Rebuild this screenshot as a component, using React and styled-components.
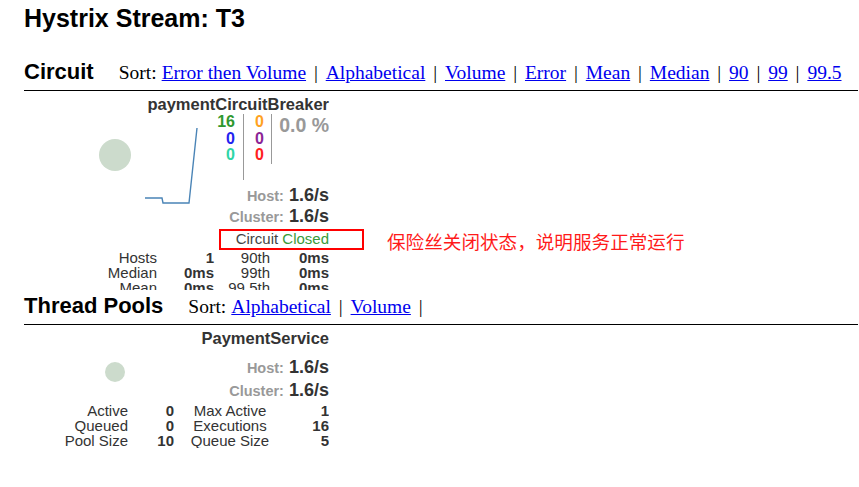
import React from 'react'
import styled, { createGlobalStyle } from 'styled-components'

const GlobalStyle = createGlobalStyle`
  body {
    margin: 0;
    background: #fff;
    color: #000;
    font-family: "Liberation Sans", Arial, sans-serif;
  }
`

const circuitSorts = ['Error then Volume', 'Alphabetical', 'Volume', 'Error', 'Mean', 'Median', '90', '99', '99.5']
const poolSorts = ['Alphabetical', 'Volume']

const circuitStats = [
    ['Hosts', '1', '90th', '0ms'],
    ['Median', '0ms', '99th', '0ms'],
    ['Mean', '0ms', '99.5th', '0ms']
]

const poolStats = [
    ['Active', '0', 'Max Active', '1'],
    ['Queued', '0', 'Executions', '16'],
    ['Pool Size', '10', 'Queue Size', '5']
]

const Page = styled.div`
    padding: 4px 1px 0 24px;
`

const Title = styled.h1`
    margin: 0;
    font-size: 25px;
    line-height: 29px;
    font-weight: bold;
`

const SectionHeader = styled.div`
    display: flex;
    align-items: baseline;
    height: 31px;
    margin-top: ${props => props.$top || 0}px;
    border-bottom: 1px solid #000;
`

const SectionTitle = styled.h2`
    margin: 0;
    font-size: 22px;
    line-height: 26px;
    font-weight: bold;
`

const Sort = styled.div`
    margin-left: 25px;
    font-family: "Liberation Serif", "Times New Roman", serif;
    font-size: 19.5px;
    line-height: 20px;
    white-space: nowrap;
`

const SortLink = styled.a`
    color: #0000ee;
    text-decoration: underline;
    cursor: pointer;
    margin-left: ${props => props.$first ? '5px' : '0'};
`

const Sep = styled.span`
    padding: 0 3px;
`

const Monitor = styled.div`
    width: 305px;
    color: #333;
`

const MonitorName = styled.div`
    margin-top: 3px;
    text-align: right;
    font-size: 16.5px;
    line-height: 20px;
    font-weight: bold;
    color: #333;
`

const MonitorBody = styled.div`
    display: flex;
    margin-top: ${props => props.$top || 0}px;
`

const Chart = styled.svg`
    display: block;
    flex: none;
`

const Side = styled.div`
    flex: 1;
    display: flex;
    flex-direction: column;
`

const Counters = styled.div`
    display: flex;
    margin-bottom: 5px;
`

const CountColumn = styled.div`
    box-sizing: border-box;
    width: ${props => props.$width}px;
    height: ${props => props.$height}px;
    padding-right: ${props => props.$pad}px;
    border-right: 1px solid #999;
    text-align: right;
    font-size: 16px;
    line-height: 16.5px;
    font-weight: bold;
`

const Count = styled.div`
    color: ${props => props.$color};
`

const ErrorRate = styled.div`
    flex: 1;
    text-align: right;
    font-size: 19.5px;
    line-height: 22px;
    font-weight: bold;
    color: #999;
`

const RateRow = styled.div`
    text-align: right;
    font-size: 18px;
    line-height: ${props => props.$line}px;
    font-weight: bold;
    color: #333;
    white-space: nowrap;
`

const RateLabel = styled.span`
    font-size: 14.5px;
    color: #999;
`

const StatusRow = styled.div`
    position: relative;
    margin-top: 2px;
    text-align: right;
    font-size: 15px;
    line-height: 20px;
    color: #444;
`

const Closed = styled.span`
    color: #3a9a3a;
`

const Highlight = styled.div`
    position: absolute;
    left: 195px;
    top: 0;
    width: 145px;
    height: 21px;
    box-sizing: border-box;
    border: 2px solid #ff0000;
`

const Note = styled.div`
    position: absolute;
    left: 363px;
    top: 1px;
    white-space: nowrap;
    font-family: "Noto Sans CJK SC", "Liberation Sans", sans-serif;
    font-size: 18.6px;
    line-height: 21px;
    color: #ff1a1a;
`

const StatsGrid = styled.div`
    display: grid;
    grid-template-columns: ${props => props.$cols};
    margin-top: ${props => props.$top}px;
    margin-bottom: ${props => props.$bottom || 0}px;
    height: ${props => props.$height ? props.$height + 'px' : 'auto'};
    overflow: hidden;
    font-size: 15px;
    line-height: 15px;
    color: #333;
`

const Cell = styled.div`
    text-align: ${props => props.$align || 'right'};
    font-weight: ${props => props.$bold ? 'bold' : 'normal'};
    white-space: nowrap;
`

const SortBar = ({ items, trailing }) => (
    <Sort>
        Sort:
        {items.map((item, i) => (
            <React.Fragment key={item}>
                {i > 0 && <Sep>&nbsp;|&nbsp;</Sep>}
                <SortLink $first={i === 0}>{item}</SortLink>
            </React.Fragment>
        ))}
        {trailing && <Sep>&nbsp;|</Sep>}
    </Sort>
)

const Stats = ({ rows, cols, top, bottom, height, centerThird }) => (
    <StatsGrid $cols={cols} $top={top} $bottom={bottom} $height={height}>
        {rows.map(row => row.map((cell, i) => (
            <Cell key={row[0] + i} $bold={i % 2 === 1} $align={centerThird && i === 2 ? 'center' : 'right'}>
                {cell}
            </Cell>
        )))}
    </StatsGrid>
)

const App = () => {
    return (
        <Page>
            <GlobalStyle />
            <Title>Hystrix Stream: T3</Title>

            <SectionHeader $top={26}>
                <SectionTitle>Circuit</SectionTitle>
                <SortBar items={circuitSorts} />
            </SectionHeader>

            <Monitor>
                <MonitorName>paymentCircuitBreaker</MonitorName>
                <MonitorBody>
                    <Chart width="186" height="111" viewBox="0 0 186 111">
                        <circle cx="91" cy="41" r="16" fill="#ccdbcc" />
                        <polyline
                            points="121,84 138,84 139,89 165,89 173,14"
                            fill="none"
                            stroke="#4a84b6"
                            strokeWidth="1.4"
                        />
                    </Chart>
                    <Side>
                        <Counters>
                            <CountColumn $width={34} $height={66} $pad={8}>
                                <Count $color="#2f982f">16</Count>
                                <Count $color="#2323f0">0</Count>
                                <Count $color="#2ed5a6">0</Count>
                            </CountColumn>
                            <CountColumn $width={28} $height={50} $pad={7}>
                                <Count $color="#ffa21f">0</Count>
                                <Count $color="#8c2596">0</Count>
                                <Count $color="#ff2020">0</Count>
                            </CountColumn>
                            <ErrorRate>0.0 %</ErrorRate>
                        </Counters>
                        <RateRow $line={20}><RateLabel>Host:</RateLabel> 1.6/s</RateRow>
                        <RateRow $line={20}><RateLabel>Cluster:</RateLabel> 1.6/s</RateRow>
                    </Side>
                </MonitorBody>
                <StatusRow>
                    Circuit <Closed>Closed</Closed>
                    <Highlight />
                    <Note>保险丝关闭状态，说明服务正常运行</Note>
                </StatusRow>
                <Stats rows={circuitStats} cols="133px 57px 56px 59px" top={1} height={40} bottom={3} />
            </Monitor>

            <SectionHeader>
                <SectionTitle>Thread Pools</SectionTitle>
                <SortBar items={poolSorts} trailing />
            </SectionHeader>

            <Monitor>
                <MonitorName>PaymentService</MonitorName>
                <MonitorBody $top={8}>
                    <Chart width="186" height="44" viewBox="0 0 186 44">
                        <circle cx="91" cy="16" r="10" fill="#ccdbcc" />
                    </Chart>
                    <Side>
                        <RateRow $line={22}><RateLabel>Host:</RateLabel> 1.6/s</RateRow>
                        <RateRow $line={22}><RateLabel>Cluster:</RateLabel> 1.6/s</RateRow>
                    </Side>
                </MonitorBody>
                <Stats rows={poolStats} cols="104px 46px 112px 43px" top={0.5} centerThird />
            </Monitor>
        </Page>
    )
}

export default App
